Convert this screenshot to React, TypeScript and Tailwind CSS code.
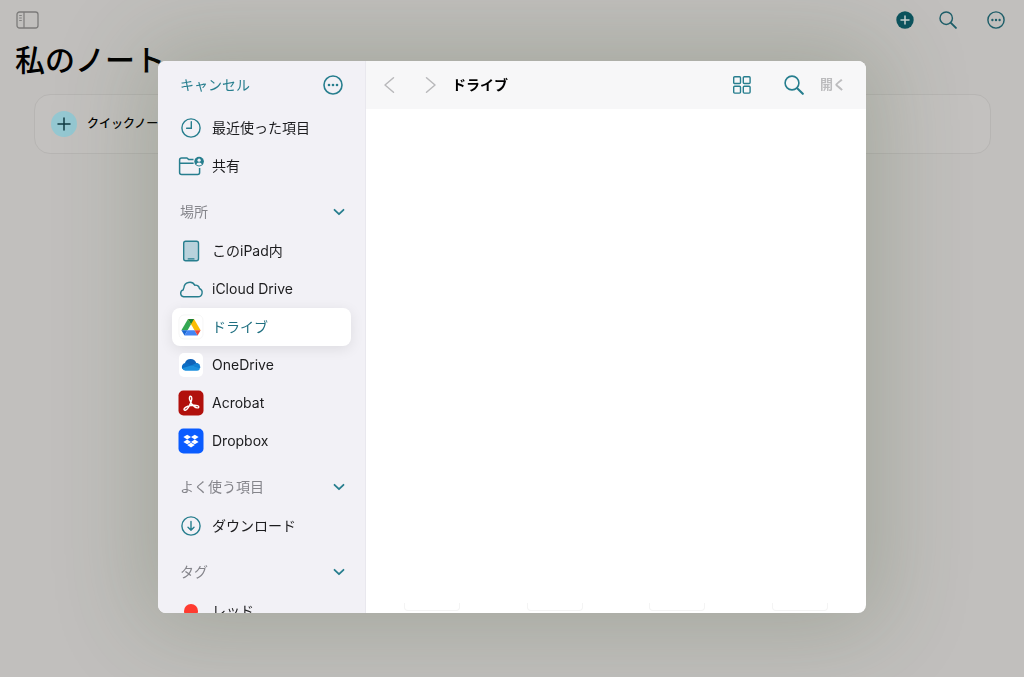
import { ReactNode, useState } from "react";

interface Place {
  id: string;
  label: string;
  icon: ReactNode;
}

interface Section {
  title: string;
  items: Place[];
}

const Magnifier = ({ className }: { className: string }) => (
  <svg viewBox="0 0 20 20" fill="none" stroke="currentColor" strokeLinecap="round" className={className}>
    <circle cx="8" cy="8" r="6.9" strokeWidth="1.6" />
    <path d="M13.2 13.2 18.8 18.8" strokeWidth="2.1" />
  </svg>
);

const MoreCircle = ({ className }: { className: string }) => (
  <svg viewBox="0 0 20 20" fill="none" stroke="currentColor" className={className}>
    <circle cx="10" cy="10" r="9" strokeWidth="1.6" />
    <g fill="currentColor" stroke="none">
      <circle cx="6" cy="10" r="1.3" />
      <circle cx="10" cy="10" r="1.3" />
      <circle cx="14" cy="10" r="1.3" />
    </g>
  </svg>
);

const ChevronDown = ({ open }: { open: boolean }) => (
  <svg
    viewBox="0 0 12 12"
    fill="none"
    stroke="currentColor"
    strokeWidth="1.8"
    strokeLinecap="round"
    strokeLinejoin="round"
    className={open ? "size-3" : "size-3 -rotate-90"}
  >
    <path d="M1.5 3.8 6 8.2l4.5-4.4" />
  </svg>
);

const ClockIcon = () => (
  <svg viewBox="0 0 26 26" fill="none" stroke="currentColor" strokeWidth="1.4" strokeLinecap="round" className="size-[26px]">
    <circle cx="13" cy="13" r="9.1" />
    <path d="M13.3 6.8v6.4H8.6" />
  </svg>
);

const SharedFolderIcon = () => (
  <svg viewBox="0 0 26 26" fill="none" stroke="currentColor" strokeWidth="1.5" strokeLinejoin="round" className="size-[26px]">
    <path d="M15.5 6.6h-4.7L9 5H3.6Q1.6 5 1.6 7v12.4q0 2 2 2h16q2 0 2-2V15" />
    <path d="M1.6 10.2h14" />
    <circle cx="21.1" cy="8.6" r="4.8" fill="currentColor" stroke="none" />
    <circle cx="21.1" cy="7.2" r="1.6" fill="#f2f1f6" stroke="none" />
    <path d="M18.3 11.4q.5-2 2.8-2t2.8 2q-2.8 2-5.6 0z" fill="#f2f1f6" stroke="none" />
  </svg>
);

const TabletIcon = () => (
  <svg viewBox="0 0 26 26" fill="none" stroke="currentColor" strokeWidth="1.4" className="size-[26px]">
    <rect x="5.700" y="3.200" width="14.800" height="19.600" rx="2" fill="#b9d2dc" />
    <path d="M10.300 20.900h5.600" strokeLinecap="round" />
  </svg>
);

const CloudIcon = () => (
  <svg viewBox="0 0 26 26" fill="none" stroke="currentColor" strokeWidth="1.4" strokeLinejoin="round" className="size-[26px]">
    <path d="M5.600 20.800h14.300a4.300 4.300 0 0 0 1.500-8.300 3.600 3.600 0 0 0-4.500-3.200 5.900 5.900 0 0 0-11 2.500 3 3 0 0 0-.6 2A3.600 3.600 0 0 0 5.600 20.800z" />
  </svg>
);

const DriveIcon = () => (
  <svg viewBox="0 0 26 26" className="size-[26px]">
    <rect x="1" y="1" width="24" height="24" rx="5" fill="#fff" stroke="#f0f0f0" strokeWidth=".6" />
    <path d="M10 5 3.400 16.300h6.200L13 10.300z" fill="#34a853" />
    <path d="M16 5h-6l6.500 11.300h6.100z" fill="#fbbc04" />
    <path d="M10 5h6l-3 5.200z" fill="#188038" />
    <path d="M3.400 16.300h6.200L6.500 21.600z" fill="#1967d2" />
    <path d="M9.600 16.300h6.900l3.100 5.300H6.500z" fill="#4285f4" />
    <path d="M16.500 16.300h6.100l-3 5.300z" fill="#ea4335" />
  </svg>
);

const OneDriveIcon = () => (
  <svg viewBox="0 0 26 26" className="size-[26px]">
    <rect x="1" y="1" width="24" height="24" rx="5" fill="#fff" />
    <path d="M6.900 11.200a6.100 6.100 0 0 1 11.400-.3 4 4 0 0 1 2.600 1.300L13 15z" fill="#0f62b8" />
    <path d="M7 10.900a4 4 0 0 1 3.200.6l10 6.600H8L4.200 16.700A4.200 4.200 0 0 1 7 10.900z" fill="#0b6cc4" />
    <path d="M13.200 13.600 18.300 10.900a4 4 0 0 1 3.900 4.300l-1.800 2.500z" fill="#1480d2" />
    <path d="M4.100 16.300 13.200 13.600l8.900 2.900a3.300 3.300 0 0 1-3 2.300H7.400a4 4 0 0 1-3.300-2.500z" fill="#1c90de" />
  </svg>
);

const AcrobatIcon = () => (
  <svg viewBox="0 0 26 26" className="size-[26px]">
    <rect x=".5" y=".5" width="25" height="25" rx="5" fill="#b1100c" />
    <path
      d="M12.600 6.300c1.700 0 1.300 3.200.5 5.500-1.300 3.500-3.700 7.900-5.700 8.400-1.300.3-1.900-.8-.9-1.900 1.500-1.700 5.500-2.800 9.500-3 2.600-.1 4.900.4 4.800 1.700-.1 1.500-2.700 1-4.400-.4-2.300-1.800-4.200-4.500-4.800-7-.4-1.800-.1-3.300 1-3.300z"
      fill="none"
      stroke="#fff"
      strokeWidth="1.4"
      strokeLinejoin="round"
    />
  </svg>
);

const DropboxIcon = () => (
  <svg viewBox="0 0 26 26" className="size-[26px]">
    <rect x=".5" y=".5" width="25" height="25" rx="5" fill="#0a5cff" />
    <g fill="#fff">
      <path d="M9.200 6.700 13 9.100 9.200 11.500 5.400 9.100z" />
      <path d="M16.800 6.700 20.600 9.100 16.800 11.500 13 9.100z" />
      <path d="M9.200 11.500 13 13.900 9.200 16.300 5.400 13.900z" />
      <path d="M16.800 11.500 20.600 13.900 16.800 16.300 13 13.900z" />
      <path d="M13 14.700 16.800 17.100 13 19.500 9.200 17.100z" />
    </g>
  </svg>
);

const DownloadIcon = () => (
  <svg viewBox="0 0 26 26" fill="none" stroke="currentColor" strokeWidth="1.4" strokeLinecap="round" strokeLinejoin="round" className="size-[26px]">
    <circle cx="13" cy="13" r="9.1" />
    <path d="M13 8.500v8.700M10 14.300l3 3 3-3" />
  </svg>
);

const TagDot = () => (
  <span className="flex size-[26px] items-center justify-center">
    <span className="size-3.5 rounded-full bg-[#ff3b30]" />
  </span>
);

const recents: Place[] = [
  { id: "recent", label: "最近使った項目", icon: <ClockIcon /> },
  { id: "shared", label: "共有", icon: <SharedFolderIcon /> },
];

const sections: Section[] = [
  {
    title: "場所",
    items: [
      { id: "ipad", label: "このiPad内", icon: <TabletIcon /> },
      { id: "icloud", label: "iCloud Drive", icon: <CloudIcon /> },
      { id: "drive", label: "ドライブ", icon: <DriveIcon /> },
      { id: "onedrive", label: "OneDrive", icon: <OneDriveIcon /> },
      { id: "acrobat", label: "Acrobat", icon: <AcrobatIcon /> },
      { id: "dropbox", label: "Dropbox", icon: <DropboxIcon /> },
    ],
  },
  {
    title: "よく使う項目",
    items: [{ id: "downloads", label: "ダウンロード", icon: <DownloadIcon /> }],
  },
  {
    title: "タグ",
    items: [{ id: "red", label: "レッド", icon: <TagDot /> }],
  },
];

const App = () => {
  const [selected, setSelected] = useState("drive");
  const [closed, setClosed] = useState<string[]>([]);

  const toggleSection = (title: string) => {
    setClosed(
      closed.includes(title)
        ? closed.filter((t) => t !== title)
        : [...closed, title]
    );
  };

  const renderPlace = (place: Place) => (
    <li key={place.id}>
      <button
        onClick={() => setSelected(place.id)}
        className={`flex h-[38px] w-full items-center gap-2 rounded-lg pl-1.5 text-left ${
          selected === place.id
            ? "bg-white text-[#1f6f80] shadow-[0_3px_14px_rgba(0,0,0,0.09)]"
            : "text-[#1c1c1e]"
        }`}
      >
        <span className="shrink-0 text-[#277e8e]">{place.icon}</span>
        {place.label}
      </button>
    </li>
  );

  return (
    <div className="min-h-screen overflow-hidden bg-[#c1bfbd] font-['Inter','Noto_Sans_CJK_JP',sans-serif] text-sm text-black">
      {/* Notes page behind the picker */}
      <header className="flex h-10 items-center justify-between pr-[19px] pl-4">
        <button aria-label="Sidebar" className="text-[#7c7b7a]">
          <svg viewBox="0 0 23 18" fill="none" stroke="currentColor" className="h-[18px] w-[23px]">
            <rect x="1" y="1" width="21" height="16" rx="2.500" strokeWidth="1.300" />
            <path d="M8 1v16" strokeWidth="1.200" />
            <path d="M3.200 4.500h2.600M3.200 7h2.600M3.200 9.500h2.600" strokeWidth=".9" />
          </svg>
        </button>
        <div className="flex items-center text-[#1e5e69]">
          <button aria-label="New" className="mr-[25px]">
            <svg viewBox="0 0 18 18" className="size-[18px]">
              <circle cx="9" cy="9" r="8.700" fill="#0c535e" />
              <path d="M9 5v8M5 9h8" stroke="#c9d3d2" strokeWidth="1.500" strokeLinecap="round" />
            </svg>
          </button>
          <button aria-label="Search" className="mr-[30px]">
            <Magnifier className="size-[18px]" />
          </button>
          <button aria-label="More">
            <MoreCircle className="size-[18px]" />
          </button>
        </div>
      </header>
      <main>
        <h1 className="pl-[15px] text-[30px] leading-10 font-medium">私のノート</h1>
        <div className="mt-3.5 mr-[33px] ml-[34px] flex h-[60px] items-center rounded-2xl border border-[#b7b5b3] bg-[#c3c1bf] pl-4">
          <button className="flex items-center gap-2.5 text-xs font-medium">
            <span className="flex size-[26px] items-center justify-center rounded-full bg-[#95c8d2]">
              <svg viewBox="0 0 14 14" className="size-3.5">
                <path d="M7 1v12M1 7h12" stroke="#0f3a42" strokeWidth="1.500" strokeLinecap="round" />
              </svg>
            </span>
            クイックノート
          </button>
        </div>
      </main>

      {/* File picker */}
      <div className="fixed inset-0 flex items-center justify-center pb-1">
        <div
          role="dialog"
          aria-label="ドライブ"
          className="flex h-[552px] max-h-full w-full max-w-[708px] overflow-hidden rounded-lg bg-white shadow-[0_0_90px_16px_rgba(60,80,40,0.22)]"
        >
          <aside className="w-52 shrink-0 overflow-hidden border-r border-[#e9e8ee] bg-[#f2f1f6] px-3.5">
            <div className="flex h-12 items-center justify-between px-2 text-[#277e8e]">
              <button>キャンセル</button>
              <button aria-label="More">
                <MoreCircle className="size-5" />
              </button>
            </div>
            <ul>{recents.map(renderPlace)}</ul>
            {sections.map((section) => (
              <section key={section.title}>
                <h2>
                  <button
                    onClick={() => toggleSection(section.title)}
                    className="flex h-[47px] w-full items-center justify-between pt-2 pr-1.5 pl-2 text-[#85858b]"
                  >
                    {section.title}
                    <span className="text-[#277e8e]">
                      <ChevronDown open={!closed.includes(section.title)} />
                    </span>
                  </button>
                </h2>
                {!closed.includes(section.title) && (
                  <ul>{section.items.map(renderPlace)}</ul>
                )}
              </section>
            ))}
          </aside>

          <div className="flex min-w-0 flex-1 flex-col">
            <div className="flex h-12 shrink-0 items-center bg-[#f7f7f8] pr-5 pl-4">
              <button aria-label="Back" className="mr-6 text-[#b9b9bb]">
                <svg viewBox="0 0 16 18" fill="none" stroke="currentColor" strokeWidth="1.500" strokeLinecap="round" strokeLinejoin="round" className="h-[18px] w-4">
                  <path d="M11.500 1.700 3 9l8.500 7.300" />
                </svg>
              </button>
              <button aria-label="Forward" className="mr-3.5 text-[#b9b9bb]">
                <svg viewBox="0 0 16 18" fill="none" stroke="currentColor" strokeWidth="1.500" strokeLinecap="round" strokeLinejoin="round" className="h-[18px] w-4">
                  <path d="M4.500 1.700 13 9l-8.500 7.300" />
                </svg>
              </button>
              <h2 className="flex-1 font-bold">ドライブ</h2>
              <button aria-label="Grid view" className="mr-8 text-[#277e8e]">
                <svg viewBox="0 0 20 20" fill="none" stroke="currentColor" strokeWidth="1.400" className="size-5">
                  <rect x="1.700" y="1.700" width="6.800" height="6.800" rx="1" />
                  <rect x="11.300" y="1.700" width="6.800" height="6.800" rx="1" />
                  <rect x="1.700" y="11.300" width="6.800" height="6.800" rx="1" />
                  <rect x="11.300" y="11.300" width="6.800" height="6.800" rx="1" />
                </svg>
              </button>
              <button aria-label="Search" className="mr-4 text-[#277e8e]">
                <Magnifier className="size-5" />
              </button>
              <button disabled className="text-[13px] font-bold text-[#bcbcbe]">
                開く
              </button>
            </div>
            {/* Lower edges of the first row of thumbnails */}
            <div className="flex flex-1 items-end justify-between px-[38px] pb-0.5">
              {[0, 1, 2, 3].map((i) => (
                <div key={i} className="h-2 w-14 rounded-b-sm border border-t-0 border-[#f4f4f4]" />
              ))}
            </div>
          </div>
        </div>
      </div>
    </div>
  );
};

export default App;
